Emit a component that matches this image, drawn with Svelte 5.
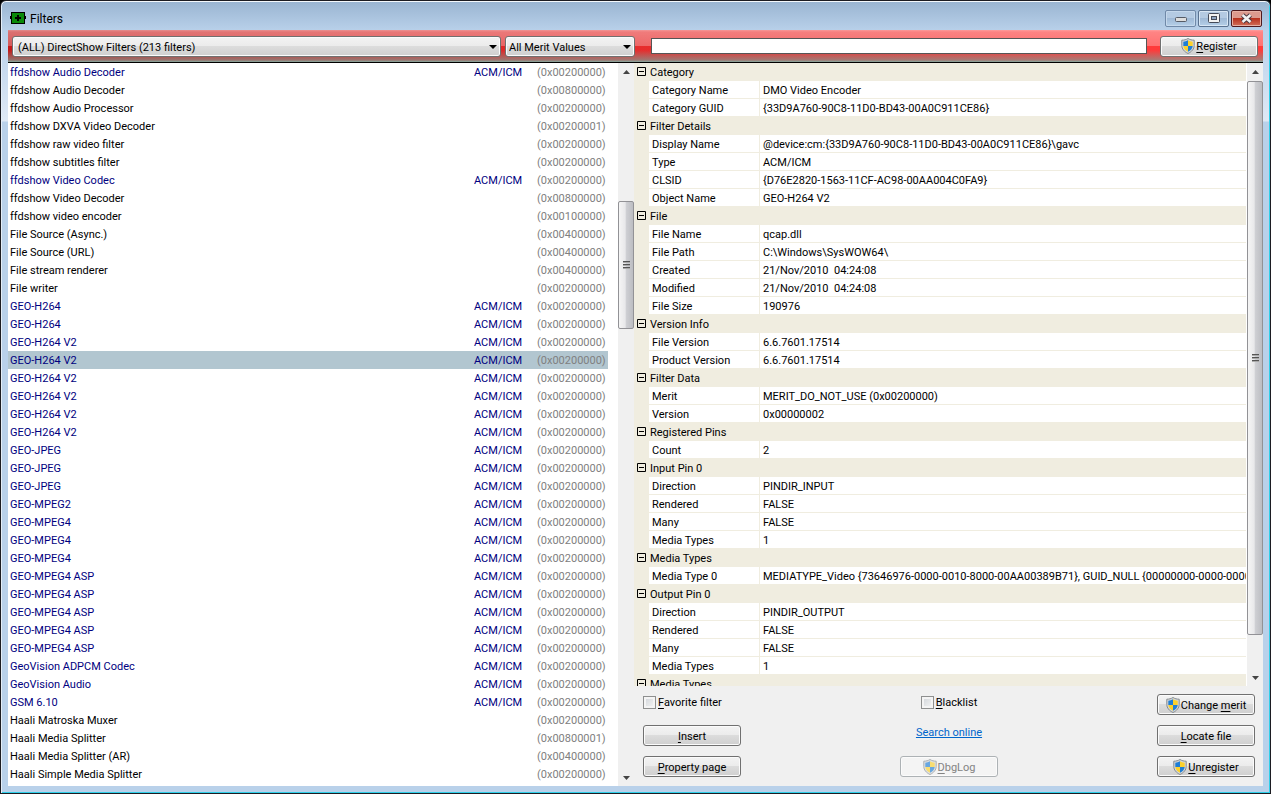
<script lang="ts">
  type Filter = { name: string; merit: string; acm?: boolean }
  type Section = { title: string; rows: [string, string][] }

  const f = (name: string, merit = '00200000', acm = false): Filter => ({ name, merit, acm })
  const acm = (name: string) => f(name, '00200000', true)

  const filters: Filter[] = [
    acm('ffdshow Audio Decoder'),
    f('ffdshow Audio Decoder', '00800000'),
    f('ffdshow Audio Processor'),
    f('ffdshow DXVA Video Decoder', '00200001'),
    f('ffdshow raw video filter'),
    f('ffdshow subtitles filter'),
    acm('ffdshow Video Codec'),
    f('ffdshow Video Decoder', '00800000'),
    f('ffdshow video encoder', '00100000'),
    f('File Source (Async.)', '00400000'),
    f('File Source (URL)', '00400000'),
    f('File stream renderer', '00400000'),
    f('File writer'),
    acm('GEO-H264'),
    acm('GEO-H264'),
    acm('GEO-H264 V2'),
    acm('GEO-H264 V2'),
    acm('GEO-H264 V2'),
    acm('GEO-H264 V2'),
    acm('GEO-H264 V2'),
    acm('GEO-H264 V2'),
    acm('GEO-JPEG'),
    acm('GEO-JPEG'),
    acm('GEO-JPEG'),
    acm('GEO-MPEG2'),
    acm('GEO-MPEG4'),
    acm('GEO-MPEG4'),
    acm('GEO-MPEG4'),
    acm('GEO-MPEG4 ASP'),
    acm('GEO-MPEG4 ASP'),
    acm('GEO-MPEG4 ASP'),
    acm('GEO-MPEG4 ASP'),
    acm('GEO-MPEG4 ASP'),
    acm('GeoVision ADPCM Codec'),
    acm('GeoVision Audio'),
    acm('GSM 6.10'),
    f('Haali Matroska Muxer'),
    f('Haali Media Splitter', '00800001'),
    f('Haali Media Splitter (AR)', '00400000'),
    f('Haali Simple Media Splitter'),
  ]

  const sections: Section[] = [
    {
      title: 'Category',
      rows: [
        ['Category Name', 'DMO Video Encoder'],
        ['Category GUID', '{33D9A760-90C8-11D0-BD43-00A0C911CE86}'],
      ],
    },
    {
      title: 'Filter Details',
      rows: [
        ['Display Name', '@device:cm:{33D9A760-90C8-11D0-BD43-00A0C911CE86}\\gavc'],
        ['Type', 'ACM/ICM'],
        ['CLSID', '{D76E2820-1563-11CF-AC98-00AA004C0FA9}'],
        ['Object Name', 'GEO-H264 V2'],
      ],
    },
    {
      title: 'File',
      rows: [
        ['File Name', 'qcap.dll'],
        ['File Path', 'C:\\Windows\\SysWOW64\\'],
        ['Created', '21/Nov/2010  04:24:08'],
        ['Modified', '21/Nov/2010  04:24:08'],
        ['File Size', '190976'],
      ],
    },
    {
      title: 'Version Info',
      rows: [
        ['File Version', '6.6.7601.17514'],
        ['Product Version', '6.6.7601.17514'],
      ],
    },
    {
      title: 'Filter Data',
      rows: [
        ['Merit', 'MERIT_DO_NOT_USE (0x00200000)'],
        ['Version', '0x00000002'],
      ],
    },
    { title: 'Registered Pins', rows: [['Count', '2']] },
    {
      title: 'Input Pin 0',
      rows: [
        ['Direction', 'PINDIR_INPUT'],
        ['Rendered', 'FALSE'],
        ['Many', 'FALSE'],
        ['Media Types', '1'],
      ],
    },
    {
      title: 'Media Types',
      rows: [
        [
          'Media Type 0',
          'MEDIATYPE_Video {73646976-0000-0010-8000-00AA00389B71}, GUID_NULL {00000000-0000-0000-0000-000000000000}',
        ],
      ],
    },
    {
      title: 'Output Pin 0',
      rows: [
        ['Direction', 'PINDIR_OUTPUT'],
        ['Rendered', 'FALSE'],
        ['Many', 'FALSE'],
        ['Media Types', '1'],
      ],
    },
    { title: 'Media Types', rows: [] },
  ]

  let selected = $state(16)
  let search = $state('')
  let favorite = $state(false)
  let blacklist = $state(false)
</script>

{#snippet shield()}
  <svg class="shield" width="14" height="16" viewBox="0 0 14 16" aria-hidden="true">
    <path d="M7 .5C5.200 1.700 3 2.200.800 2.200V7.500C.800 11 3.500 13.900 7 15.500c3.500-1.600 6.200-4.500 6.200-8V2.200C11 2.200 8.800 1.700 7 .5z" fill="#d5d8da" stroke="#858b8f" />
    <path d="M7 2.300C5.500 3.200 4 3.600 2.300 3.700V8H7z" fill="#1f7ed6" />
    <path d="M7 2.300c1.500.9 3 1.300 4.700 1.400V8H7z" fill="#fbd12c" />
    <path d="M2.300 8H7v5.800C4.500 12.500 2.500 10.600 2.300 8z" fill="#fbd12c" />
    <path d="M11.700 8H7v5.800c2.500-1.300 4.500-3.200 4.700-5.800z" fill="#1f7ed6" />
  </svg>
{/snippet}

{#snippet scrollbar(before: number, thumb: number, after: number)}
  <div class="scrollbar">
    <button class="step" aria-label="Scroll up">
      <svg width="7" height="4" viewBox="0 0 7 4"><path d="M3.500 0L7 4H0z" fill="#444" /></svg>
    </button>
    <div class="track">
      <div style="flex: {before} 1 0"></div>
      <div class="thumb" style="flex: {thumb} 1 0">
        <svg width="7" height="8" viewBox="0 0 7 8">
          <path d="M0 .5h7M0 3.500h7M0 6.500h7" stroke="#555" />
          <path d="M0 1.500h7M0 4.500h7M0 7.500h7" stroke="#aaa" />
        </svg>
      </div>
      <div style="flex: {after} 1 0"></div>
    </div>
    <button class="step" aria-label="Scroll down">
      <svg width="7" height="4" viewBox="0 0 7 4"><path d="M0 0h7L3.500 4z" fill="#444" /></svg>
    </button>
  </div>
{/snippet}

<div class="window">
  <header>
    <svg width="16" height="14" viewBox="0 0 16 14" aria-hidden="true">
      <path d="M0 5h2v3H0zM14 5h2v3h-2z" fill="#000" />
      <rect x="1.500" y="1.500" width="13" height="11" fill="#0a8a0a" stroke="#000" />
      <path d="M8 4v6M5 7h6" stroke="#000" stroke-width="2" />
    </svg>
    <h1>Filters</h1>
    <div class="caption">
      <button aria-label="Minimize">
        <svg class="low" width="12" height="6" viewBox="0 0 12 6"><rect x=".5" y=".5" width="11" height="4" rx="1" fill="#ddd" stroke="#555b66" /></svg>
      </button>
      <button class="max" aria-label="Maximize">
        <svg width="12" height="10" viewBox="0 0 12 10">
          <rect x=".5" y=".5" width="11" height="9" rx="1" fill="#f2f2f2" stroke="#444a58" />
          <rect x="3.500" y="3.500" width="5" height="3" fill="#8fa5c2" stroke="#444a58" />
        </svg>
      </button>
      <button class="close" aria-label="Close">
        <svg width="13" height="11" viewBox="0 0 13 11">
          <path d="M2.500 2l8 7M10.500 2l-8 7" stroke="#4b3840" stroke-width="4.500" />
          <path d="M2.500 2l8 7M10.500 2l-8 7" stroke="#f2f2f2" stroke-width="2.500" />
        </svg>
      </button>
    </div>
  </header>

  <div class="client">
    <div class="toolbar">
      <div class="pickers">
        <div class="select category">
          <select aria-label="Category">
            <option>(ALL) DirectShow Filters (213 filters)</option>
          </select>
        </div>
        <div class="select merit-filter">
          <select aria-label="Merit">
            <option>All Merit Values</option>
          </select>
        </div>
      </div>
      <div class="search">
        <input type="text" aria-label="Search" bind:value={search} />
        <button class="btn">{@render shield()}<span><u>R</u>egister</span></button>
      </div>
    </div>

    <main>
      <section class="filters">
        <div class="list">
          <table>
            <tbody>
              {#each filters as filter, i}
                <tr class:acm={filter.acm} class:selected={i === selected} onclick={() => (selected = i)}>
                  <td>{filter.name}</td>
                  <td class="kind">{filter.acm ? 'ACM/ICM' : ''}</td>
                  <td class="merit">(0x{filter.merit})</td>
                </tr>
              {/each}
            </tbody>
          </table>
        </div>
        {@render scrollbar(121, 127, 441)}
      </section>

      <section class="details">
        <div class="props">
          <div class="grid">
            <table>
              <colgroup>
                <col class="gutter-col" />
                <col class="key-col" />
                <col />
              </colgroup>
              <tbody>
                {#each sections as section}
                  <tr class="head">
                    <td class="gutter">
                      <button class="toggle" aria-label="Collapse {section.title}">
                        <svg width="9" height="9" viewBox="0 0 9 9"><path d="M.5 .5h8v8h-8zM2 4.500h5" fill="none" stroke="#000" /></svg>
                      </button>
                    </td>
                    <th colspan="2">{section.title}</th>
                  </tr>
                  {#each section.rows as [key, value]}
                    <tr>
                      <td class="gutter"></td>
                      <td class="key">{key}</td>
                      <td class="value">{value}</td>
                    </tr>
                  {/each}
                {/each}
              </tbody>
            </table>
          </div>
          {@render scrollbar(1, 555, 34)}
        </div>

        <div class="actions">
          <div class="column">
            <label><input type="checkbox" bind:checked={favorite} /><span><u>F</u>avorite filter</span></label>
            <button class="btn"><span><u>I</u>nsert</span></button>
            <button class="btn"><span><u>P</u>roperty page</span></button>
          </div>
          <div class="column middle">
            <label><input type="checkbox" bind:checked={blacklist} /><span><u>B</u>lacklist</span></label>
            <a href="#search">Search online</a>
            <button class="btn" disabled>{@render shield()}<span><u>D</u>bgLog</span></button>
          </div>
          <div class="column">
            <button class="btn">{@render shield()}<span>Change <u>m</u>erit</span></button>
            <button class="btn"><span><u>L</u>ocate file</span></button>
            <button class="btn">{@render shield()}<span><u>U</u>nregister</span></button>
          </div>
        </div>
      </section>
    </main>
  </div>
</div>

<style>
  :global(body) {
    background: #000;
    margin: 0;
  }

  .window,
  .window * {
    box-sizing: border-box;
  }

  .window {
    background: linear-gradient(#99b4d1, #b9d1ea 30px, #c4d8ee 60px, #dfe9f5 120px, #b9d1ea 121px);
    border: 1px solid #1c1c22;
    border-radius: 6px 6px 0 0;
    box-shadow: inset 0 1px #f4f8fc, inset 1px 0 #e4eef8, inset -1px -1px #2fd0ea;
    color: #000;
    display: flex;
    flex-direction: column;
    font: 11px/18px Roboto, "Noto Sans", sans-serif;
    height: 100vh;
    padding: 0 7px 7px;
  }

  button,
  input,
  select {
    color: inherit;
    font: inherit;
    margin: 0;
  }

  header {
    align-items: center;
    display: flex;
    flex: none;
    gap: 4px;
    height: 29px;
    padding: 5px 1px 0 2px;
  }

  h1 {
    flex: 1;
    font-size: 12px;
    font-weight: normal;
    margin: 0;
    padding-top: 2px;
  }

  .caption {
    display: flex;
    gap: 2px;
  }

  .caption button {
    align-items: center;
    background: linear-gradient(#b4cae2 50%, #9fb9d6 50%, #b5cfe8);
    border: 1px solid #7089a8;
    border-radius: 2px;
    box-shadow: inset 0 0 0 1px #c5d8ec;
    display: flex;
    height: 17px;
    justify-content: center;
    padding: 0;
    width: 31px;
  }

  .caption .low {
    margin-top: 4px;
  }

  .caption .max {
    border-color: #5a7290;
    box-shadow: inset 0 0 0 1px #d8e6f4;
  }

  .caption .close {
    background: linear-gradient(#dc9a8e 50%, #b8321e 50%, #d2705a);
    border-color: #4f1a1e;
    box-shadow: inset 0 0 0 1px #e6b0a4;
  }

  .client {
    display: flex;
    flex: 1;
    flex-direction: column;
    min-height: 0;
  }

  .toolbar {
    align-items: center;
    background:
      linear-gradient(#ffffff80, #ffffff60 2px, #ffffff48 16px, #ffffff00 16px, #ffffff00 20px, #7f9a92b0 30px, #86aaa0),
      linear-gradient(90deg, #c41a1a, #e62c2c 50%, #ff3a3a 85%);
    border-bottom: 1px solid #000;
    display: flex;
    flex: none;
    gap: 16px;
    height: 33px;
    padding: 0 5px 0 4px;
  }

  .pickers {
    display: flex;
    flex: 623;
    gap: 4px;
  }

  .search {
    align-items: center;
    display: flex;
    flex: 607;
    gap: 13px;
  }

  .search input {
    background: #fff;
    border: 1px solid #555;
    flex: 1;
    height: 16px;
    min-width: 0;
    outline: none;
    padding: 0 3px;
  }

  .category {
    flex: 1;
  }

  .merit-filter {
    width: 130px;
  }

  .select {
    position: relative;
  }

  .select:after {
    border: 4px solid transparent;
    border-bottom: 0;
    border-top-color: #000;
    content: '';
    pointer-events: none;
    position: absolute;
    right: 4px;
    top: 9px;
  }

  select,
  .btn {
    background: linear-gradient(#f3f3f3, #ebebeb 50%, #dcdcdc 50%, #cfcfcf);
    border: 1px solid #707070;
    border-radius: 3px;
    box-shadow: inset 0 0 0 1px #fbfbfb;
  }

  select {
    appearance: none;
    display: block;
    height: 21px;
    line-height: 18px;
    padding: 2px 16px 0 5px;
    width: 100%;
  }

  .merit-filter select {
    padding-left: 3px;
  }

  .btn {
    align-items: center;
    display: flex;
    flex: none;
    gap: 1px;
    height: 21px;
    justify-content: center;
    padding: 0;
    width: 98px;
  }

  .btn span {
    padding-top: 2px;
  }

  .btn:disabled {
    background: #f4f4f4;
    border-color: #adb2b5;
    color: #838383;
  }

  .btn:disabled .shield {
    opacity: 0.65;
  }

  u {
    text-underline-offset: 2px;
  }

  main {
    display: flex;
    flex: 1;
    min-height: 0;
  }

  .filters {
    background: #fff;
    display: flex;
    flex: 626;
    overflow: hidden;
  }

  .list {
    flex: 1;
    overflow: hidden;
    padding-right: 10px;
  }

  table {
    border-spacing: 0;
    width: 100%;
  }

  td,
  th {
    font-weight: normal;
    height: 18px;
    line-height: 16px;
    padding: 2px 2px 0;
    text-align: left;
    white-space: pre;
  }

  .acm {
    color: #000080;
  }

  .selected {
    background: #b2c6d0;
  }

  .kind {
    width: 63px;
  }

  .merit {
    color: #808080;
    width: 73px;
  }

  .scrollbar {
    background: #f0f0f0;
    display: flex;
    flex: none;
    flex-direction: column;
    width: 16px;
  }

  .step {
    align-items: center;
    background: none;
    border: 0;
    display: flex;
    height: 17px;
    justify-content: center;
    padding: 0;
  }

  .track {
    display: flex;
    flex: 1;
    flex-direction: column;
  }

  .thumb {
    align-items: center;
    background: linear-gradient(90deg, #f5f5f5, #e8e8ea 45%, #cfd0d4 50%, #bcbdc2);
    border: 1px solid #929296;
    border-radius: 2px;
    display: flex;
    justify-content: center;
  }

  .details {
    background: #f0f0f0;
    display: flex;
    flex: 629;
    flex-direction: column;
    min-width: 0;
  }

  .props {
    display: flex;
    flex: 1;
    min-height: 0;
  }

  .grid {
    background: #f0ede0;
    border-right: 1px solid #fff;
    flex: 1;
    min-width: 0;
    overflow: hidden;
  }

  .grid table {
    table-layout: fixed;
  }

  .gutter-col {
    width: 15px;
  }

  .key-col {
    width: 111px;
  }

  .grid td,
  .grid th {
    border-bottom: 1px solid #f0ede0;
    line-height: 15px;
    overflow: hidden;
    padding: 2px 2px 0;
  }

  .grid th {
    padding-left: 1px;
  }

  .grid .gutter {
    padding: 0 0 0 3px;
  }

  .toggle {
    background: none;
    border: 0;
    display: block;
    height: 9px;
    padding: 0;
    width: 9px;
  }

  .toggle svg {
    display: block;
  }

  .grid .key,
  .grid .value {
    background: #fff;
    padding-left: 3px;
  }

  .grid .key {
    border-right: 1px solid #f0ede0;
  }

  .actions {
    display: flex;
    flex: none;
    height: 100px;
    justify-content: space-between;
    padding: 8px 8px 9px 9px;
  }

  .column {
    display: flex;
    flex-direction: column;
    justify-content: space-between;
  }

  .middle {
    align-items: center;
  }

  label {
    align-items: center;
    display: flex;
    gap: 2px;
    height: 16px;
    margin-bottom: 5px;
  }

  .middle label {
    margin-bottom: 0;
  }

  label input {
    appearance: none;
    background: linear-gradient(135deg, #cfd3d8, #f6f6f6);
    border: 1px solid #8e8f8f;
    box-shadow: inset 0 0 0 2px #f4f4f4;
    height: 13px;
    width: 13px;
  }

  label span {
    padding-top: 1px;
  }

  a {
    color: #0066cc;
    line-height: 16px;
  }
</style>
